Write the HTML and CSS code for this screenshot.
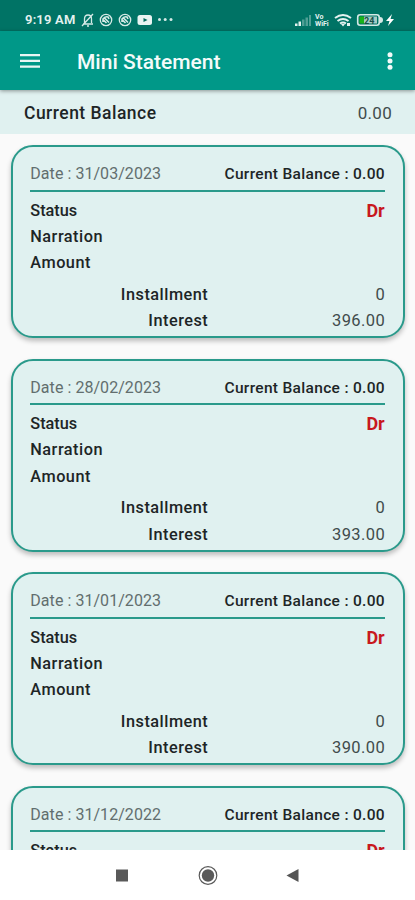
FILE: index.html
```html
<!DOCTYPE html>
<html lang="en">
<head>
<meta charset="utf-8">
<title>Mini Statement</title>
<link rel="stylesheet" href="styles.css">
</head>
<body>
<div class="status-bar">
  <span class="clock">9:19 AM</span>
  <svg class="left-icons" width="94" height="16" viewBox="0 0 94 16" fill="none" stroke="#d5eae6" stroke-width="1.3">
    <path d="M2 12h10M3.500 11V7q0-4 3.500-4t3.500 4v4M6 14h2M1 14 12 2"/>
    <g id="chat"><circle cx="25" cy="8" r="5.700"/><path d="m22 10v-3q2-3 5-2l1 2M23 5.500l5 5M22.500 8l3 3" stroke-width="1.600"/></g>
    <use href="#chat" x="19"/>
    <rect x="56.500" y="3" width="14.500" height="10" rx="2.500" fill="#e8f4f2" stroke="none"/><path d="m62.500 6 4 2-4 2z" fill="#00695c" stroke="none"/>
    <g fill="#d5eae6" stroke="none"><circle cx="78.500" cy="7.500" r="1.500"/><circle cx="84.200" cy="7.500" r="1.500"/><circle cx="90" cy="7.500" r="1.500"/></g>
  </svg>
  <svg class="right-icons" width="104" height="16" viewBox="0 0 104 16">
    <g fill="#e4f2f0"><path d="M1 11.500h2.500V14H1zM4.500 9.500H7V14H4.500z"/><path d="M8 7.500h2.500V14H8zM11.500 5.500H14V14h-2.500zM15 3h2v11h-2z" opacity=".35"/></g>
    <text class="vo" x="21" y="7">Vo</text><text class="vo" x="21" y="14">WiFi</text>
    <g fill="none" stroke="#e4f2f0" stroke-width="2"><path d="M41 6q8-6 16 0M43.500 9q5.500-4 11 0M46 11.500q3-2 6 0"/></g>
    <path d="m47 12 2 2.500 2-2.500zM53 11h3v3h-3z" fill="#e4f2f0"/>
    <rect x="63.700" y="2.700" width="21.500" height="10.600" rx="2.500" fill="none" stroke="#d5e9e6" stroke-width="1.600"/>
    <path d="M86 5q3 0 3 3t-3 3z" fill="#d5e9e6"/>
    <path d="M65.500 4.500H70v7h-4.500z" fill="#19b319"/><path d="M70 4.500h13v7H70z" fill="#a5cbc5"/>
    <text class="battery" x="70" y="11.500">24</text>
    <path d="m98 2-6 7h3.500L94 14l6-7h-3.500z" fill="#fff"/>
  </svg>
</div>
<header class="app-bar">
  <svg width="20" height="14" viewBox="0 0 20 14" fill="#e9f6f4"><path d="M0 0h20v2.300H0zM0 5.700h20V8H0zM0 11.400h20v2.300H0z"/></svg>
  <h1>Mini Statement</h1>
  <svg width="6" height="18" viewBox="0 0 6 18" fill="#f2faf9"><circle cx="3" cy="2.700" r="2.500"/><circle cx="3" cy="9" r="2.500"/><circle cx="3" cy="15.300" r="2.500"/></svg>
</header>
<section class="balance"><b>Current Balance</b><span>0.00</span></section>
<main class="list">
  <article class="card">
    <div class="head"><span class="date">Date : 31/03/2023</span><span class="current">Current Balance : 0.00</span></div>
    <div class="row"><b class="status">Status</b><span class="dr">Dr</span></div>
    <div class="row"><b>Narration</b></div>
    <div class="row"><b>Amount</b></div>
    <div class="detail first"><b>Installment</b><span>0</span></div>
    <div class="detail"><b>Interest</b><span>396.00</span></div>
  </article>
  <article class="card">
    <div class="head"><span class="date">Date : 28/02/2023</span><span class="current">Current Balance : 0.00</span></div>
    <div class="row"><b class="status">Status</b><span class="dr">Dr</span></div>
    <div class="row"><b>Narration</b></div>
    <div class="row"><b>Amount</b></div>
    <div class="detail first"><b>Installment</b><span>0</span></div>
    <div class="detail"><b>Interest</b><span>393.00</span></div>
  </article>
  <article class="card">
    <div class="head"><span class="date">Date : 31/01/2023</span><span class="current">Current Balance : 0.00</span></div>
    <div class="row"><b class="status">Status</b><span class="dr">Dr</span></div>
    <div class="row"><b>Narration</b></div>
    <div class="row"><b>Amount</b></div>
    <div class="detail first"><b>Installment</b><span>0</span></div>
    <div class="detail"><b>Interest</b><span>390.00</span></div>
  </article>
  <article class="card">
    <div class="head"><span class="date">Date : 31/12/2022</span><span class="current">Current Balance : 0.00</span></div>
    <div class="row"><b class="status">Status</b><span class="dr">Dr</span></div>
  </article>
</main>
<nav class="nav-bar">
  <svg width="415" height="50" viewBox="0 0 415 50">
    <path d="M116 19.500h12v12h-12z" fill="#595959"/>
    <circle cx="208" cy="25.500" r="8.800" fill="none" stroke="#595959" stroke-width="1.200"/><circle cx="208" cy="25.500" r="6.200" fill="#595959"/>
    <path d="M286.500 25.500 298.500 19v13z" fill="#555"/>
  </svg>
</nav>
</body>
</html>
```

FILE: styles.css
```css
* { box-sizing: border-box; }
body {
  margin: 0;
  height: 900px;
  display: flex;
  flex-direction: column;
  overflow: hidden;
  background: #fafafa;
  color: #1d2526;
  font: 16px Roboto, sans-serif;
}
b { font-weight: 500; }
svg { display: block; flex: none; }
.status-bar {
  flex: none;
  height: 31px;
  padding: 8px 17px 0 25px;
  display: flex;
  background: #007365;
}
.clock { width: 56px; flex: none; font-size: 13px; letter-spacing: .2px; line-height: 24px; height: 24px; font-weight: 600; color: #e4f2f0; white-space: nowrap; }
.left-icons { margin-top: 4px; }
.right-icons { margin: 4px 0 0 auto; }
.vo { font: 700 7px Roboto, sans-serif; fill: #e4f2f0; }
.battery { font: 700 9px Roboto, sans-serif; fill: #174f48; }
.app-bar {
  flex: none;
  position: relative;
  height: 59px;
  padding: 0 22px 0 20px;
  display: flex;
  align-items: center;
  background: #009888;
  box-shadow: 0 1px 4px rgba(0, 0, 0, .4);
}
.app-bar h1 { flex: 1; margin: 2px 0 0 37px; font-size: 21px; font-weight: 500; color: #f4fbfa; }
.balance {
  flex: none;
  height: 44px;
  padding: 0 23px 0 24px;
  display: flex;
  justify-content: space-between;
  align-items: center;
  background: #e0f1f0;
  font-size: 17.5px;
  line-height: 46px;
}
.balance b { padding-top: 1px; letter-spacing: .48px; }
.balance span { padding-top: 1px; font-size: 17px; letter-spacing: .3px; color: #414c4c; }
.list {
  flex: 1;
  min-height: 0;
  overflow: hidden;
  padding: 11.3px 10px 0 11px;
  display: flex;
  flex-direction: column;
  gap: 20.5px;
}
.card {
  flex: none;
  height: 193px;
  padding: 14px 18.3px 0 17.3px;
  border: 2px solid #2a9a8b;
  border-radius: 22px;
  background: #e0f1f0;
  box-shadow: 0 3px 5px rgba(0, 0, 0, .25);
}
.head {
  height: 30.5px;
  margin-bottom: 6px;
  display: flex;
  justify-content: space-between;
  border-bottom: 2.5px solid #2a9a8b;
  line-height: 26px;
  white-space: nowrap;
}
.date { color: #626e6e; letter-spacing: .05px; }
.current { font-size: 15.5px; font-weight: 500; letter-spacing: .32px; margin-right: -.3px; }
.row, .detail { height: 26.2px; line-height: 26.2px; display: flex; justify-content: space-between; }
.row b, .detail b { font-size: 16.3px; letter-spacing: .5px; }
.row .status { letter-spacing: 0; }
.dr { font-size: 18px; font-weight: 700; color: #c8181e; }
.detail { display: grid; grid-template-columns: 178px 1fr; text-align: right; }
.first { margin-top: 5.5px; }
.detail span { color: #414c4c; font-size: 16.5px; letter-spacing: .4px; margin-right: -.4px; }
.nav-bar { flex: none; height: 50px; background: #fff; }
```
